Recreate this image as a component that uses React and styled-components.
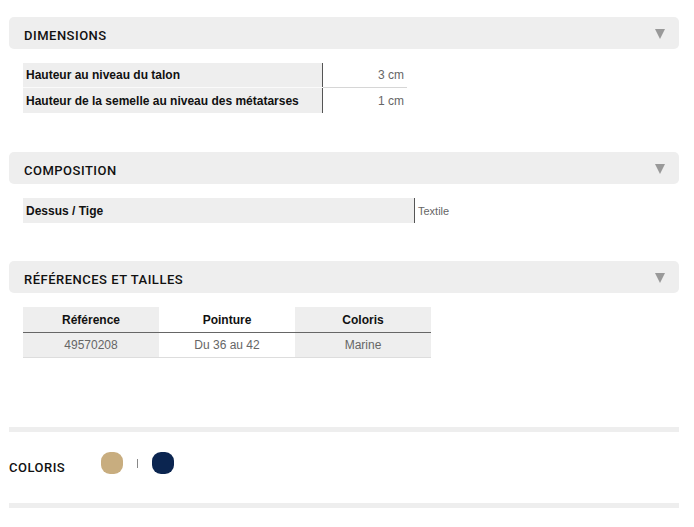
import React from 'react'
import styled, {createGlobalStyle} from 'styled-components'

const Global = createGlobalStyle`
body {
  margin: 0;
  background: #fff;
  font-family: "Liberation Sans", Arial, sans-serif;
}
`

const Page = styled.div`
width: 670px;
padding: 17px 0 0 9px;
`

const Section = styled.section`
margin-bottom: ${p => p.$gap}px;
`

const Header = styled.div`
display: flex;
align-items: center;
justify-content: space-between;
height: 32px;
padding: 0 14px 0 15px;
background: #eeeeee;
border-radius: 5px;
`

const Title = styled.h2`
margin: 0;
padding-top: 5px;
font-family: Roboto, "DejaVu Sans Condensed", sans-serif;
font-weight: 500;
font-size: 13px;
letter-spacing: 0.5px;
color: #111;
`

const Arrow = styled.span`
width: 0;
height: 0;
border-left: 5px solid transparent;
border-right: 5px solid transparent;
border-top: 10px solid #999;
margin-top: 2px;
`

const Body = styled.div`
padding: 14px 0 0 14px;
`

const SpecTable = styled.table`
border-collapse: collapse;
font-size: 12px;
`

const Label = styled.td`
width: ${p => p.$w}px;
height: ${p => p.$line ? 24 : 25}px;
padding: 0 3px;
background: #eeeeee;
border-right: 1px solid #555;
border-bottom: ${p => p.$line ? '1px solid #fafafa' : '0'};
font-weight: bold;
color: #111;
`

const Value = styled.td`
width: ${p => p.$w}px;
padding: 0 3px;
text-align: ${p => p.$align || 'right'};
font-size: ${p => p.$small ? 11 : 12}px;
color: #666;
border-bottom: ${p => p.$line ? '1px solid #d6d6d6' : '0'};
`

const RefTable = styled.table`
border-collapse: collapse;
font-size: 12px;
`

const Th = styled.th`
width: 136px;
height: 25px;
padding: 0;
background: ${p => p.$alt ? '#eeeeee' : '#fff'};
border-bottom: 1px solid #666;
font-weight: bold;
color: #111;
text-align: center;
`

const Td = styled.td`
height: 24px;
padding: 0;
background: ${p => p.$alt ? '#eeeeee' : '#fff'};
border-bottom: 1px solid #dddddd;
color: #666;
text-align: center;
`

const Rule = styled.div`
height: 5px;
background: #eeeeee;
`

const ColorRow = styled.div`
display: flex;
align-items: center;
height: 71px;
`

const ColorLabel = styled.span`
width: 92px;
padding-top: 0;
font-family: Roboto, "DejaVu Sans Condensed", sans-serif;
font-weight: 500;
font-size: 13px;
letter-spacing: 0.5px;
color: #111;
`

const Swatch = styled.span`
width: 22px;
height: 22px;
border-radius: 9px;
background: ${p => p.$color};
margin-top: -9px;
`

const Pipe = styled.span`
width: 1px;
height: 9px;
margin: -8px 14px 0;
background: #888;
`

const dims = [
  ['Hauteur au niveau du talon', '3 cm'],
  ['Hauteur de la semelle au niveau des métatarses', '1 cm'],
]

function Panel({title, gap, children}) {
  return <Section $gap={gap}>
    <Header>
      <Title>{title}</Title>
      <Arrow />
    </Header>
    <Body>{children}</Body>
  </Section>
}

export default function App() {
  return <Page>
    <Global />
    <Panel title="DIMENSIONS" gap={39}>
      <SpecTable>
        <tbody>
          {dims.map(([label, value], i) => <tr key={label}>
            <Label $w={293} $line={i < dims.length - 1}>{label}</Label>
            <Value $w={78} $line={i < dims.length - 1}>{value}</Value>
          </tr>)}
        </tbody>
      </SpecTable>
    </Panel>
    <Panel title="COMPOSITION" gap={38}>
      <SpecTable>
        <tbody>
          <tr>
            <Label $w={385}>Dessus / Tige</Label>
            <Value $align="left" $small>Textile</Value>
          </tr>
        </tbody>
      </SpecTable>
    </Panel>
    <Panel title="RÉFÉRENCES ET TAILLES" gap={69}>
      <RefTable>
        <thead>
          <tr>
            <Th $alt>Référence</Th>
            <Th>Pointure</Th>
            <Th $alt>Coloris</Th>
          </tr>
        </thead>
        <tbody>
          <tr>
            <Td $alt>49570208</Td>
            <Td>Du 36 au 42</Td>
            <Td $alt>Marine</Td>
          </tr>
        </tbody>
      </RefTable>
    </Panel>
    <Rule />
    <ColorRow>
      <ColorLabel>COLORIS</ColorLabel>
      <Swatch $color="#c8ad7f" />
      <Pipe />
      <Swatch $color="#0b2550" />
    </ColorRow>
    <Rule />
  </Page>
}
